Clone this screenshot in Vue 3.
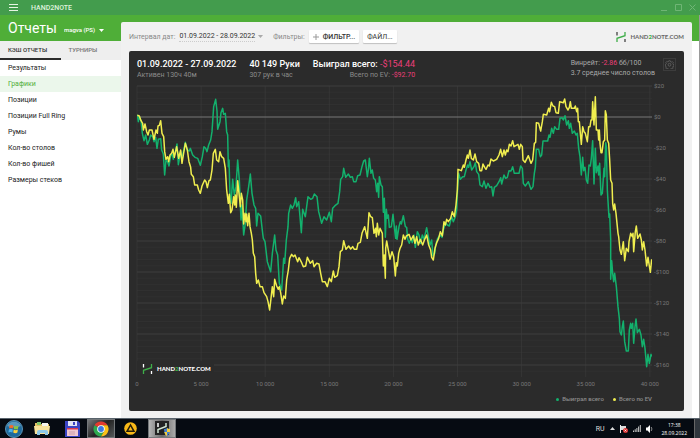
<style>
body {
  margin: 0;
}
</style>

<style scoped>
.desktop {
  display: flex;
  flex-direction: column;
  height: 100vh;
  min-height: 360px;
  font-family: Roboto, "Noto Sans", sans-serif;
  font-size: 7px;
  line-height: 10px;
  color: #333;
  background: #fff;
}

button,
select {
  font: inherit;
  color: inherit;
  background: none;
  border: none;
  padding: 0;
  margin: 0;
  cursor: pointer;
}

select {
  appearance: none;
}

svg {
  display: block;
  flex: none;
}

/* Title bar */
.titlebar {
  display: flex;
  align-items: center;
  height: 15px;
  padding: 0 4px 0 9px;
  gap: 13px;
  background: #439c4d;
  color: #dff3dd;
  font-weight: 500;
}

.app-name {
  flex: 1;
}

.window-controls {
  display: flex;
  gap: 7px;
}

/* Body */
.body {
  flex: 1;
  min-height: 0;
  display: grid;
  grid-template-columns: 121px minmax(0, 1fr);
  background: linear-gradient(#4fae38 0 26px, #fff 26px);
  border-right: 1px solid #9a9a9a;
}

.page-head {
  display: flex;
  align-items: center;
  height: 26px;
  padding-left: 8px;
  gap: 7px;
  color: #fff;
}

.page-head h1 {
  margin: 0;
  font-size: 14px;
  line-height: 18px;
  font-weight: 400;
}

.account {
  display: flex;
  align-items: center;
  gap: 3px;
  padding-top: 4px;
  font-weight: 500;
}

.account select {
  font-size: 6px;
}

.tabs {
  display: grid;
  grid-template-columns: 1fr 1fr;
  height: 19px;
  background: #eee;
}

.tab {
  padding: 0 8px;
  text-align: left;
  font-size: 6px;
  font-weight: 500;
  color: #777;
  border-bottom: 2px solid transparent;
}

.tab.active {
  color: #333;
  border-bottom-color: #2b2b2b;
}

.menu {
  list-style: none;
  margin: 0;
  padding: 0;
}

.menu a {
  display: block;
  padding-left: 8px;
  line-height: 16px;
  color: #222;
  text-decoration: none;
}

.menu a.active {
  color: #4fae38;
  background: #ebf7eb;
}

/* Content */
.content {
  display: flex;
  flex-direction: column;
  margin: 7px 7px 0 0;
  padding: 0 8px 7px;
  background: #f1f1f1;
  border-radius: 2px 2px 0 0;
}

.toolbar {
  display: flex;
  align-items: center;
  height: 29px;
  gap: 4px;
  color: #888;
}

.date-range {
  display: flex;
  align-items: center;
  gap: 3px;
  color: #333;
}

.date-range span {
  border-bottom: 1px dotted #ccc;
}

.filter-label {
  margin-left: 6px;
}

.btn {
  display: flex;
  align-items: center;
  height: 13px;
  padding: 0 4px;
  gap: 4px;
  color: #333;
  background: #fff;
  border-radius: 1px;
  box-shadow: 0 1px 1px rgba(0, 0, 0, 0.2);
}

.btn.strong {
  font-weight: 500;
}

.brand {
  display: flex;
  align-items: center;
  gap: 4px;
  font-family: Lato, "Noto Sans", sans-serif;
  font-size: 6px;
  font-weight: 700;
  color: #666;
}

.brand b {
  color: #3fae49;
}

.toolbar .brand {
  margin-left: auto;
}

/* Chart card */
.card {
  flex: 1;
  min-height: 0;
  display: flex;
  flex-direction: column;
  padding: 7px 8px;
  background: #2b2b2b;
  border-radius: 2px;
  color: #8c8c8c;
}

.summary {
  display: flex;
  gap: 13px;
  height: 28px;
}

.summary strong {
  display: block;
  font-size: 9px;
  line-height: 12px;
  font-weight: 500;
  color: #fff;
}

.summary em {
  font-style: normal;
  font-weight: 400;
  color: #ec3f7a;
}

.totals {
  text-align: right;
}

.winrate {
  margin-left: auto;
  color: #aaa;
}

.gear {
  display: flex;
  align-items: center;
  justify-content: center;
  width: 13px;
  height: 13px;
  margin-left: -5px;
  border: 1px solid #3c3c3c;
  color: #666;
}

.plot-area {
  position: relative;
  flex: 1;
  min-height: 0;
  margin-right: 24px;
}

.plot {
  width: 100%;
  height: 100%;
  overflow: visible;
}

.grid-minor {
  stroke: #313131;
}

.grid-major {
  stroke: #3d3d3d;
}

.grid-zero {
  stroke: #777;
}

.axis-label {
  font-size: 6px;
  fill: #787878;
}

.axis-label.x {
  text-anchor: middle;
}

.line {
  fill: none;
  stroke-width: 1.5;
  stroke-linejoin: round;
  vector-effect: non-scaling-stroke;
}

.watermark {
  position: absolute;
  left: 0;
  bottom: 0;
  padding: 2px 3px 2px 5px;
  background: #2b2b2b;
  color: #fff;
  font-weight: 900;
}

.legend {
  display: flex;
  justify-content: flex-end;
  gap: 9px;
  margin: 17px 24px 0 0;
  font-size: 6px;
  font-weight: 500;
}

.legend span {
  display: flex;
  align-items: center;
  gap: 3px;
}

.legend i {
  width: 3px;
  height: 3px;
  border-radius: 50%;
}

/* Taskbar */
.taskbar {
  display: flex;
  align-items: center;
  height: 19px;
  background: #060b12;
  border-top: 1px solid #59636c;
  color: #ddd;
}

.task {
  display: flex;
  align-items: center;
  justify-content: center;
  width: 30px;
  height: 19px;
}

.task.start {
  width: 27px;
}

.task.open {
  width: 28px;
  background: linear-gradient(135deg, #77797b, #222 50%, #55585a);
  border: 1px solid #73777a;
  box-sizing: border-box;
}

.task.current {
  margin-left: 3px;
  background: linear-gradient(90deg, #b5b5b5, #666 50%, #aaa);
}

.tray {
  display: flex;
  align-items: center;
  gap: 5px;
  margin-left: auto;
}

.clock {
  margin: 0 2px 0 4px;
  font-family: "Open Sans", "Noto Sans", sans-serif;
  font-size: 5px;
  line-height: 8px;
  text-align: center;
  color: #fff;
}

.show-desktop {
  width: 6px;
  height: 19px;
  background: #30363d;
  border-left: 1px solid #666;
}
</style>

<template>
  <div class="desktop">
    <header class="titlebar">
      <button aria-label="Меню">
        <svg width="9" height="7" viewBox="0 0 9 7" stroke="#e6f5e3">
          <path d="M0 .5h9M0 3.5h9M0 6.5h9" />
        </svg>
      </button>
      <span class="app-name">HAND2NOTE</span>
      <div class="window-controls">
        <button aria-label="Свернуть">
          <svg width="7" height="7" stroke="#6fb575"><path d="M0 6.5h6" /></svg>
        </button>
        <button aria-label="Развернуть">
          <svg width="7" height="7" fill="none" stroke="#6fb575"><path d="M.5 .5h6v6h-6z" /></svg>
        </button>
        <button aria-label="Закрыть">
          <svg width="7" height="7" stroke="#6fb575"><path d="M.5 .5l6 6M6.5 .5l-6 6" /></svg>
        </button>
      </div>
    </header>

    <div class="body">
      <aside>
        <div class="page-head">
          <h1>Отчеты</h1>
          <label class="account">
            <select v-model="account" aria-label="Аккаунт">
              <option>magva (PS)</option>
            </select>
            <svg width="5" height="3" fill="#fff"><path d="M0 0h5L2.500 3z" /></svg>
          </label>
        </div>
        <div class="tabs">
          <button
            v-for="tab in tabs"
            :key="tab"
            class="tab"
            :class="{ active: tab === currentTab }"
            @click="currentTab = tab"
          >
            {{ tab }}
          </button>
        </div>
        <ul class="menu">
          <li v-for="item in menu" :key="item">
            <a
              href="#"
              :class="{ active: item === currentItem }"
              @click.prevent="currentItem = item"
              >{{ item }}</a
            >
          </li>
        </ul>
      </aside>

      <main class="content">
        <div class="toolbar">
          <span>Интервал дат:</span>
          <button class="date-range">
            <span>01.09.2022 - 28.09.2022</span>
            <svg width="5" height="3" fill="#aaa"><path d="M0 0h5L2.500 3z" /></svg>
          </button>
          <span class="filter-label">Фильтры:</span>
          <button class="btn strong">
            <svg width="6" height="6" stroke="#999"><path d="M3 0v6M0 3h6" /></svg>
            ФИЛЬТР...
          </button>
          <button class="btn">ФАЙЛ...</button>
          <div class="brand">
            <svg width="10" height="12" viewBox="0 0 10 12" fill="none" stroke-width="1.3">
              <path d="M1 1v3.500M9 8v3" stroke="#444" />
              <path d="M1 11V7.300l8-2.600V1" stroke="#3fae49" />
            </svg>
            <span>HAND<b>2</b>NOTE.COM</span>
          </div>
        </div>

        <section class="card">
          <div class="summary">
            <div>
              <strong>01.09.2022 - 27.09.2022</strong>
              Активен 130ч 40м
            </div>
            <div>
              <strong>40 149 Руки</strong>
              307 рук в час
            </div>
            <div class="totals">
              <strong>Выиграл всего: <em>-$154.44</em></strong>
              Всего по EV: <em>-$92.70</em>
            </div>
            <div class="winrate">
              Винрейт: <em>-2.86</em> бб/100<br />
              3.7 среднее число столов
            </div>
            <button class="gear" aria-label="Настройки">
              <svg width="9" height="9" viewBox="0 0 18 18" fill="none" stroke="currentColor" stroke-width="1.600">
                <path
                  d="M7.500 1.500h3l.6 2.200 1.600.7 2-1.100 2 2-1.100 2 .6 1.500 2 .7v2.600l-2.200.6-.6 1.400 1 2-2 2-2-1-1.300.6-.6 2H7.500l-.7-2.100-1.300-.6-2 1.100-2-2 1-2-.5-1.400-1.500-.6V9l1.600-.7.6-1.500-1-2 2-2 2 1.100 1.300-.6z"
                />
                <circle cx="9" cy="9.500" r="2.800" />
              </svg>
            </button>
          </div>

          <div class="plot-area">
            <svg class="plot">
              <line
                v-for="n in 47"
                :key="'m' + n"
                class="grid-minor"
                x1="0"
                x2="100%"
                :y1="minorY(n)"
                :y2="minorY(n)"
              />
              <g v-for="(hands, i) in xTicks" :key="hands">
                <line class="grid-major" :x1="tickX(i)" :x2="tickX(i)" y1="0" y2="100%" opacity="0.6" />
                <text class="axis-label x" :x="tickX(i)" y="100%" dy="9">{{ hands }}</text>
              </g>
              <g v-for="(label, i) in yTicks" :key="label">
                <line
                  :class="label === '$0' ? 'grid-zero' : 'grid-major'"
                  x1="0"
                  x2="100%"
                  :y1="tickY(i)"
                  :y2="tickY(i)"
                />
                <text class="axis-label" x="100%" dx="2" :y="tickY(i)" dy="2">{{ label }}</text>
              </g>
              <svg width="100%" height="100%" viewBox="0 0 1545 873" preserveAspectRatio="none">
                <polyline
                  v-for="s in series"
                  :key="s.name"
                  class="line"
                  :points="s.points"
                  :stroke="s.color"
                />
              </svg>
            </svg>
            <div class="brand watermark">
              <svg width="11" height="12" viewBox="0 0 10 12" fill="none" stroke-width="1.3">
                <path d="M1 1v3.500M9 8v3" stroke="#fff" />
                <path d="M1 11V7.300l8-2.600V1" stroke="#3fae49" />
              </svg>
              <span>HAND<b>2</b>NOTE.COM</span>
            </div>
          </div>

          <div class="legend">
            <span v-for="s in series" :key="s.name">
              <i :style="{ background: s.color }"></i>{{ s.name }}
            </span>
          </div>
        </section>
      </main>
    </div>

    <footer class="taskbar">
      <button class="task start" aria-label="Пуск">
        <svg width="18" height="18" viewBox="0 0 18 18">
          <circle cx="9" cy="9" r="8.500" fill="#1f6a9c" stroke="#5b93b5" />
          <path d="M2 6a8 8 0 0 1 14 0Q9 9 2 6z" fill="#7fb9d6" opacity=".6" />
          <path d="M4.500 5.500q2-1.200 4 0l-.5 3q-2-1-4 0z" fill="#f06a2c" />
          <path d="M9.200 5.700q2 1.200 4.300 0l-.5 3q-2 1.200-4.200 0z" fill="#8cc63f" />
          <path d="M3.900 9.400q2-1.200 4 0l-.5 3.200q-2-1.200-4 0z" fill="#4db1ea" />
          <path d="M8.700 9.600q2 1.200 4.200 0l-.5 3q-2 1.200-4.200 0z" fill="#fdd23e" />
        </svg>
      </button>
      <button class="task" aria-label="Проводник">
        <svg width="17" height="15" viewBox="0 0 17 15">
          <path d="M1 2h5l1 1h8v10H1z" fill="#e3c263" />
          <path d="M3 1h4v3H3z" fill="#7fc36b" />
          <path d="M8 2h6v3H8z" fill="#f4f4ee" />
          <path d="M0 5h16l-1 8H1z" fill="#f7e29a" />
          <path d="M3 14v-3q0-2 2-2h7q2 0 2 2v3h-3v-2H6v2z" fill="#8cc8e8" />
        </svg>
      </button>
      <button class="task" aria-label="Total Commander">
        <svg width="15" height="16" viewBox="0 0 15 16">
          <path d="M0 0h13l2 2v14H0z" fill="#3a44c4" />
          <path d="M3 0h9v5H3z" fill="#dfe3f5" />
          <path d="M8 1h2v3H8z" fill="#3a44c4" />
          <path d="M2 7h11v8H2z" fill="#f0c8d0" />
          <path d="M2 7h11v1.500H2z" fill="#d8394c" />
          <path d="M4 11h6M4 13h6" stroke="#b98f9e" stroke-width=".7" />
        </svg>
      </button>
      <button class="task open" aria-label="Chrome">
        <svg width="16" height="16" viewBox="0 0 16 16">
          <path d="M8 8L1.500 4.200A7.500 7.500 0 0 1 14.500 4.200H8z" fill="#e33b2e" />
          <path d="M8 8L1.500 4.200A7.500 7.500 0 0 0 8 15.500l3.300-5.600z" fill="#2da94f" />
          <path d="M8 4.200h6.500A7.500 7.500 0 0 1 8 15.500l3.500-6z" fill="#fbc116" />
          <circle cx="8" cy="8" r="3.800" fill="#fff" />
          <circle cx="8" cy="8" r="2.900" fill="#3b79e0" />
        </svg>
      </button>
      <button class="task" aria-label="AIMP">
        <svg width="13" height="13" viewBox="0 0 13 13">
          <circle cx="6.500" cy="6.500" r="6.300" fill="#f9b918" />
          <path d="M6.500 3L3 9.300h7z" fill="none" stroke="#241c0a" stroke-width="1.500" />
        </svg>
      </button>
      <button class="task open current" aria-label="Hand2Note">
        <svg width="15" height="15" viewBox="0 0 15 15" fill="none">
          <path d="M0 0h14v14H0z" fill="#222" />
          <path d="M3 2v4M11 8v4" stroke="#fff" stroke-width="1.500" />
          <path d="M3 12V8.500l8-3V2" stroke="#d4e8d6" stroke-width="1.500" />
          <path d="M9 8q2 0 3-1 1 1 3 1 0 5-3 7-3-2-3-7z" fill="#3f7fd0" />
          <path d="M12 7q1 1 3 1v3h-3zM9.200 11H12v4q-2-1-2.800-4z" fill="#f5cf3d" />
        </svg>
      </button>

      <div class="tray">
        <span>RU</span>
        <svg width="5" height="3" fill="#ddd"><path d="M0 3h5L2.500 0z" /></svg>
        <svg width="8" height="8" viewBox="0 0 8 8">
          <path d="M.5 0v8" stroke="#eee" />
          <path d="M1 1h5v4H1z" fill="#ddd" />
          <circle cx="5.500" cy="5.500" r="2.500" fill="#d93434" />
          <path d="M4.500 4.500l2 2M6.500 4.500l-2 2" stroke="#fff" stroke-width=".7" />
        </svg>
        <svg width="8" height="7" viewBox="0 0 8 7" fill="#c8c8c8">
          <path d="M0 5.500h1V7H0zM1.700 4.300h1V7h-1zM3.400 3h1v4h-1zM5.100 1.500h1V7h-1zM6.800 0h1v7h-1z" />
        </svg>
        <svg width="7" height="8" viewBox="0 0 7 8">
          <path d="M0 2.500h1.500L4 0v8L1.500 5.500H0z" fill="#fff" />
          <path d="M5.200 2q1.500 2 0 4" fill="none" stroke="#aaa" stroke-width=".8" />
        </svg>
        <div class="clock">17:38<br />28.09.2022</div>
        <button class="show-desktop" aria-label="Показать рабочий стол"></button>
      </div>
    </footer>
  </div>
</template>

<script setup>
import { ref } from "vue";

const account = ref("magva (PS)");

const tabs = ["КЭШ ОТЧЕТЫ", "ТУРНИРЫ"];
const currentTab = ref(tabs[0]);

const menu = [
  "Результаты",
  "Графики",
  "Позиции",
  "Позиции Full Ring",
  "Румы",
  "Кол-во столов",
  "Кол-во фишей",
  "Размеры стеков",
];
const currentItem = ref("Графики");

// Axes: $20 per major row, 5 000 hands per column
const yTicks = ["$20", "$0", "-$20", "-$40", "-$60", "-$80", "-$100", "-$120", "-$140", "-$160"];
const xTicks = ["0", "5 000", "10 000", "15 000", "20 000", "25 000", "30 000", "35 000", "40 000"];

const ROW = 100 / 9.387;
const COLUMN = 100 / 8.034;

const tickY = (i) => `${i * ROW}%`;
const tickX = (i) => `${i * COLUMN}%`;
const minorY = (n) => `${(n - 1) * (ROW / 5)}%`;

const series = [
  {
    name: "Выиграл всего",
    color: "#13b16d",
    points: `1,86 4,107 7,92 12,104 16,142 21,164 26,147 31,175 37,162 41,147 47,152 51,167 56,154 60,187
      64,160 71,158 74,192 79,204 83,267 87,222 92,228 96,240 101,210 106,205 109,220 115,197 120,174
      124,236 131,197 135,222 139,197 145,169 151,192 157,195 160,187 167,207 174,214 182,217 190,238
      196,212 201,182 206,187 210,197 215,177 221,162 225,137 227,107 230,62 236,40 240,75 242,130
      249,107 252,80 257,67 260,85 265,82 269,137 272,147 274,242 276,222 279,327 282,352 287,280
      292,327 297,302 302,222 307,282 312,402 315,357 320,447 325,412 329,342 335,302 340,264 345,322
      351,357 356,367 359,420 363,382 371,390 377,442 379,457 384,467 391,527 401,557 406,502 413,447
      417,492 422,507 427,592 434,612 440,517 443,532 448,462 453,422 455,382 461,357 466,367 471,357
      476,335 479,362 485,347 489,392 493,440 497,370 505,392 509,362 513,332 521,340 527,337 532,324
      540,332 545,377 554,412 561,392 569,402 577,379 583,407 587,367 594,359 603,352 608,317 611,280
      617,272 620,247 626,274 634,264 640,274 646,272 650,287 657,287 662,269 669,267 675,242 680,225
      685,222 691,272 694,252 697,217 702,262 706,252 710,277 715,282 719,317 722,292 725,334 727,272
      732,297 736,302 739,379 742,337 745,454 748,370 751,397 754,387 757,424 763,422 768,385 773,432
      776,457 778,420 780,460 786,422 790,407 793,414 799,389 805,422 809,424 812,460 817,472 821,457
      826,470 831,447 835,484 841,437 846,447 851,472 856,447 861,460 869,425 874,452 879,477 884,462
      888,510 893,502 896,477 902,457 909,447 915,454 919,432 926,410 931,417 937,420 944,392 949,407
      955,392 959,372 962,302 965,262 970,280 977,272 982,272 987,252 992,237 995,244 999,227 1004,252
      1011,242 1015,230 1019,257 1025,265 1029,297 1036,302 1041,285 1047,307 1053,292 1059,304
      1064,302 1068,330 1072,304 1079,299 1086,287 1091,275 1094,294 1101,267 1106,277 1111,274
      1116,254 1122,255 1127,242 1132,262 1146,262 1151,240 1156,247 1159,292 1165,300 1174,287
      1182,310 1188,302 1192,262 1195,244 1198,190 1205,190 1210,212 1214,207 1218,165 1232,165
      1236,147 1239,154 1244,127 1249,142 1253,122 1259,130 1265,130 1269,97 1275,95 1279,102 1284,89
      1289,117 1294,104 1297,127 1301,112 1306,142 1312,135 1317,147 1321,142 1325,187 1329,212
      1333,267 1337,214 1340,254 1344,244 1348,282 1352,292 1356,237 1360,240 1363,217 1367,164
      1371,294 1375,187 1378,260 1383,240 1385,267 1388,232 1392,327 1396,322 1401,247 1403,272
      1406,170 1408,182 1411,312 1414,362 1416,394 1418,384 1421,460 1421,580 1424,524 1427,562
      1430,587 1433,562 1438,602 1443,662 1447,697 1449,737 1453,747 1456,722 1459,705 1463,767
      1468,795 1474,795 1477,732 1481,712 1483,727 1487,712 1490,772 1494,722 1497,699 1501,740
      1507,730 1512,747 1516,782 1520,760 1524,787 1529,842 1533,805 1537,832 1542,805 1544,812`,
  },
  {
    name: "Всего по EV",
    color: "#f0ee4f",
    points: `1,88 7,90 12,104 17,112 19,132 24,114 29,137 33,147 37,132 45,132 51,160 57,132 61,142 63,120
      67,118 71,104 75,142 80,152 83,197 87,220 92,212 95,227 99,207 104,202 108,190 112,214 119,182
      125,217 131,192 135,232 139,207 145,172 151,192 156,227 161,244 163,265 169,272 173,297 181,297
      185,312 190,322 195,300 203,282 207,287 211,305 216,284 220,282 225,252 229,202 235,190 239,222
      245,227 249,197 254,212 260,217 265,247 269,312 274,352 277,325 281,380 285,372 290,332 293,357
      295,327 298,364 302,284 306,322 310,362 313,322 317,342 320,414 324,382 327,407 329,384 332,419
      336,382 339,422 343,442 346,462 349,502 353,512 356,562 359,592 364,582 369,602 376,602 381,620
      389,632 393,647 398,672 402,637 406,602 410,632 413,580 419,600 424,610 427,602 431,620 436,654
      440,630 445,637 449,582 454,552 458,517 464,505 469,512 474,507 482,527 486,515 494,530 499,542
      506,540 511,514 520,532 527,524 531,542 539,532 546,534 551,562 556,587 564,587 571,602 577,577
      583,587 589,555 593,574 601,569 606,542 610,497 616,492 620,464 627,490 635,480 641,489 647,482
      652,490 659,490 663,472 670,469 675,442 683,422 691,457 696,380 701,392 706,395 711,442 716,427
      718,452 721,412 725,447 729,427 736,442 739,540 742,507 745,577 746,487 749,465 753,487 759,520
      765,497 770,512 775,570 778,530 781,540 785,502 789,487 794,477 799,447 804,460 808,450 816,445
      822,462 829,449 834,472 839,452 844,477 850,460 857,477 863,460 869,447 875,477 881,492 884,514
      889,522 894,487 899,470 905,457 910,437 916,450 921,407 925,417 929,400 934,407 941,397 946,377
      952,392 957,357 961,312 963,250 973,254 979,237 982,244 987,222 991,207 994,217 999,192 1003,217
      1009,222 1014,204 1019,227 1025,232 1029,254 1034,254 1038,234 1043,244 1047,250 1053,237
      1057,240 1062,219 1069,225 1079,220 1086,207 1091,190 1096,212 1101,192 1105,207 1109,192
      1113,197 1117,175 1122,180 1127,164 1131,182 1143,175 1147,190 1151,175 1156,182 1158,222
      1164,229 1174,209 1182,232 1187,222 1192,172 1196,169 1198,110 1205,112 1211,135 1216,107
      1219,85 1229,87 1235,67 1238,77 1243,49 1248,60 1253,62 1257,80 1264,82 1268,47 1279,50 1283,39
      1287,62 1293,72 1297,64 1300,47 1303,67 1312,67 1315,60 1319,77 1322,67 1324,107 1327,107
      1330,142 1333,175 1337,122 1341,137 1345,142 1351,167 1355,122 1359,122 1362,102 1365,102
      1367,47 1371,117 1375,32 1378,132 1383,132 1385,162 1387,132 1389,172 1392,200 1395,200 1399,167
      1403,162 1405,74 1408,87 1411,162 1415,172 1418,222 1421,282 1425,292 1427,352 1430,372 1433,354
      1437,382 1443,442 1445,452 1449,492 1453,505 1459,467 1463,524 1468,487 1474,497 1476,467
      1481,442 1486,452 1488,442 1490,497 1495,437 1498,420 1502,457 1509,444 1513,462 1516,492
      1520,467 1524,492 1529,540 1533,514 1540,559 1544,520`,
  },
];
</script>
